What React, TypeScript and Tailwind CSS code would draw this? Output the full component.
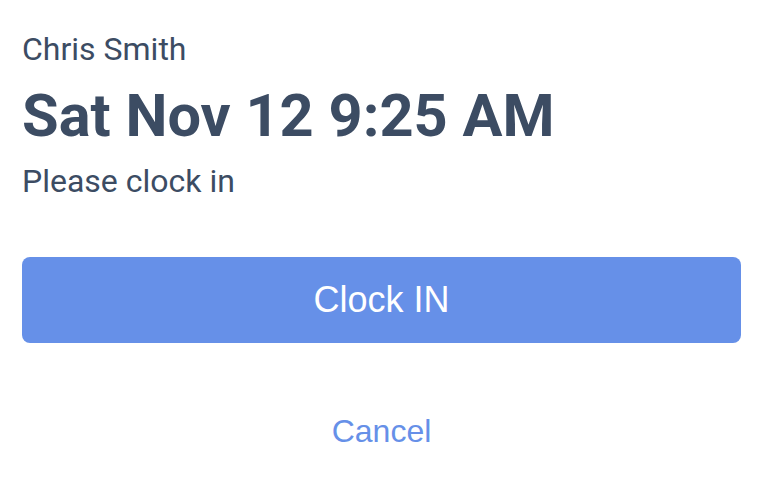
import React from 'react';

export default function App() {
  return (
    <div className="min-h-screen bg-white pl-[22px] pr-[29px] pt-[29px]">
      <div className="font-['Roboto',sans-serif] text-[#3c4c63]">
        <p className="text-[32px] leading-[40px]">Chris Smith</p>
        <h1 className="mt-[12px] text-[59.5px] font-bold leading-[70px]">Sat Nov 12 9:25 AM</h1>
        <p className="mt-[10px] text-[32px] leading-[40px]">Please clock in</p>
      </div>
      <button
        type="button"
        className="mt-[56px] flex h-[86px] w-full items-center justify-center rounded-[8px] bg-[#6690e8] font-['Liberation_Sans',Arial,sans-serif] text-[36px] text-white"
      >
        Clock IN
      </button>
      <div className="mt-[68px] flex justify-center">
        <button
          type="button"
          className="font-['Liberation_Sans',Arial,sans-serif] text-[32px] leading-[40px] text-[#6690e8]"
        >
          Cancel
        </button>
      </div>
    </div>
  );
}
